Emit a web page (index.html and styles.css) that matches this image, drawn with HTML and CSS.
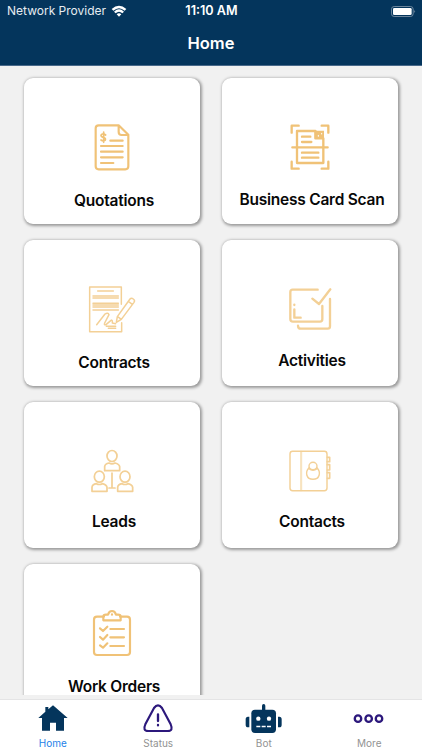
FILE: index.html
```html
<!DOCTYPE html>
<html lang="en">
<head>
<meta charset="utf-8">
<title>Home</title>
<link rel="stylesheet" href="styles.css">
</head>
<body>
<header class="header">
  <div class="status">
    <div class="carrier"><span class="provider">Network Provider</span>
      <svg class="wifi" viewBox="0 0 48 36"><path d="M2 12Q24-8 46 12L41 17Q24 2 7 17ZM9 20Q24 6 39 20L34 25Q24 16 14 25ZM17 28Q24 22 31 28L24 35Z" fill="#fff"/></svg>
    </div>
    <span class="clock">11:10 AM</span>
    <svg class="battery" viewBox="0 0 75 33"><rect x="1.5" y="1.5" width="65" height="30" rx="8" fill="none" stroke="#8195a9" stroke-width="2.5"/><rect x="6" y="6" width="56" height="21" rx="4" fill="#fff"/><path d="M70 12q5 4 0 9z" fill="#8195a9"/></svg>
  </div>
  <h1 class="title">Home</h1>
</header>
<main class="content">
  <section class="grid">
    <a class="card">
      <svg class="icon" viewBox="36 24 180 180" stroke-width="6.5"><path d="M146 46H86Q77 46 77 55V169Q77 178 86 178H166Q175 178 175 169V74L146 46V66Q146 75 155 75H175M121 92H158M93 108H158M93 125H158M93 142H158M93 159H130"/><path d="M107 75Q102 71 97 72Q91 75 94 79Q96 82 101 83Q108 85 106 90Q100 95 93 90M101 66V97" stroke-width="5"/></svg>
      <span class="label quotations">Quotations</span>
    </a>
    <a class="card">
      <svg class="icon" viewBox="150 24 180 180" stroke-width="7"><path d="M185 68V47H206M275 47H295V68M185 155V176H206M275 176H295V155M256 63H201V159H280V85M256 63L280 85M256 63V85H280M187 112H293"/><path d="M257 62H282V86L257 84Z" fill="#f0c277" stroke="none"/><path d="M216 80H241M216 96H244M216 128H265M216 143H265"/><path d="M265 76v3M275 70v2" stroke="#fff" stroke-width="3"/></svg>
      <span class="label scan">Business Card Scan</span>
    </a>
    <a class="card">
      <svg class="icon light" viewBox="36 15 180 180" stroke-width="4.5"><path d="M154 88V36H59V170H155V143M83 48H130M69 63H145M69 69H145M69 85H145M69 90H145M69 96H145M69 105H145M80 149L105 117Q114 111 117 119L104 144Q101 151 108 149L123 136Q128 133 127 144L137 146M109 154H137M115 160H137M142 125L180 72Q184 67 190 72Q196 76 192 82L154 133L139 142ZM175 79L187 88M143 125L154 133"/></svg>
      <span class="label contracts">Contracts</span>
    </a>
    <a class="card">
      <svg class="icon light" viewBox="30 15 180 180" stroke-width="7"><path d="M143 44H68Q61 44 61 51V132Q61 140 69 140H150Q157 140 157 132V93M127 71L147 87L181 43M180 72V154Q180 161 173 161H93Q84 161 84 152M73 89V90M73 103V128H92"/></svg>
      <span class="label activities">Activities</span>
    </a>
    <a class="card">
      <svg class="icon light" viewBox="36 21 180 180" stroke-width="5.2"><g id="person"><ellipse cx="126" cy="63" rx="15" ry="16.5"/><path d="M104 107V95Q105 86 117 84Q126 89 135 84Q148 87 149 95V107Z"/></g><use href="#person" x="-38" y="62"/><use href="#person" x="39" y="62"/><path d="M126 114V158M117 159H135"/></svg>
      <span class="label leads">Leads</span>
    </a>
    <a class="card">
      <svg class="icon light" viewBox="30 21 180 180" stroke-width="4.3"><rect x="60" y="49" width="111" height="118" rx="8"/><path d="M92 49V167M95 49V167" stroke-width="2"/><path d="M172 67H179V80H172M172 89H179V105H172M172 113H179V130H172" stroke-width="5"/><ellipse cx="129" cy="93" rx="12" ry="11"/><path d="M117 98C104 112 109 133 129 133S154 112 141 98M117 101Q129 110 141 101"/></svg>
      <span class="label contacts">Contacts</span>
    </a>
    <a class="card">
      <svg class="icon" viewBox="66 12 180 180" stroke-width="6.5"><path d="M132 50H111Q102 50 102 59V156Q102 165 111 165H201Q210 165 210 156V59Q210 50 201 50H180M130 61V50Q130 44 138 44H144Q147 33 156 33T168 44H174Q182 44 182 50V61ZM156 43V44M151 87H192M151 112H192M151 138H192"/><path d="M120 85L129 93L142 80M120 111L129 119L142 105M120 136L129 143L142 130"/></svg>
      <span class="label orders">Work Orders</span>
    </a>
  </section>
</main>
<nav class="tabs">
  <a class="tab active"><svg class="tabicon" viewBox="98 36 120 96"><path d="M158 46L202 84H191V122H167V98H149V122H125V84H114L135 65V51H144V58Z" fill="#04355c"/></svg><span>Home</span></a>
  <a class="tab"><svg class="tabicon" viewBox="415 36 120 96"><path d="M463 54Q475 38 487 54L513 103Q522 123 504 123H446Q428 123 437 103Z" fill="none" stroke="#2c187c" stroke-width="6.5"/><path d="M475 73V93M475 105V106" fill="none" stroke="#2c187c" stroke-width="7" stroke-linecap="round"/></svg><span>Status</span></a>
  <a class="tab"><svg class="tabicon" viewBox="98 36 120 96"><g fill="#04355c"><rect x="152" y="42" width="10" height="24" rx="5"/><rect x="120" y="59" width="74" height="70" rx="11"/><path d="M114 80V112H110Q103 112 103 104V88Q103 80 110 80ZM200 80V112H204Q211 112 211 104V88Q211 80 204 80Z"/></g><g fill="#fff"><circle cx="141" cy="86" r="6.5"/><circle cx="173" cy="86" r="6.5"/><path d="M135 107H147V112H135ZM151 107H163V112H151ZM167 107H179V112H167Z"/></g></svg><span>Bot</span></a>
  <a class="tab"><svg class="tabicon" viewBox="415 36 120 96"><g fill="none" stroke="#2c187c" stroke-width="7"><circle cx="442" cy="86" r="9.7"/><circle cx="474" cy="86" r="9.7"/><circle cx="505" cy="86" r="9.7"/></g></svg><span>More</span></a>
</nav>
</body>
</html>
```
FILE: styles.css
```css
* { box-sizing: border-box; }
body {
  margin: 0;
  width: 422px;
  height: 750px;
  display: flex;
  flex-direction: column;
  overflow: hidden;
  background: #f1f1f1;
  font-family: Inter, "Liberation Sans", sans-serif;
}
.header {
  height: 66px;
  flex: none;
  background: #04355c;
  border-bottom: 1px solid #48698a;
  color: #fff;
}
.status {
  height: 22px;
  display: grid;
  grid-template-columns: 1fr auto 1fr;
  align-items: center;
  padding: 0 6px 0 7px;
}
.carrier { display: flex; align-items: center; gap: 5px; }
.provider { font-size: 12px; line-height: 22px; color: #e6ecf1; white-space: nowrap; }
.wifi { width: 16px; height: 12px; }
.clock { font-size: 12.6px; font-weight: 600; line-height: 22px; }
.battery { width: 25px; height: 11px; justify-self: end; }
.title {
  margin: 10px 0 0;
  text-align: center;
  font-size: 16.5px;
  font-weight: 600;
  line-height: 22px;
}
.content { height: 629px; flex: none; overflow: hidden; padding: 12px 24px 0; }
.grid {
  display: grid;
  grid-template-columns: 176px 176px;
  grid-auto-rows: 146px;
  gap: 16px 22px;
}
.card {
  display: flex;
  flex-direction: column;
  align-items: center;
  padding-top: 40px;
  border-radius: 9px;
  background: #fff;
  box-shadow: 1px 1px 3px 0.5px rgba(0, 0, 0, 0.36);
}
.icon {
  width: 60px;
  height: 60px;
  flex: none;
  fill: none;
  stroke: #f0c277;
  stroke-linecap: round;
  stroke-linejoin: round;
}
.icon.light { stroke: #f3d096; }
.label {
  margin: 13px 0 0 4px;
  font-size: 15.5px;
  font-weight: 600;
  line-height: 20px;
  letter-spacing: -0.24px;
  white-space: nowrap;
  color: #080808;
}
.scan { margin-top: 12px; }
.activities { margin-top: 11px; }
.leads, .contacts { margin-top: 10px; }
.tabs {
  margin-top: 4px;
  height: 51px;
  flex: none;
  display: grid;
  grid-template-columns: repeat(4, 1fr);
  background: #fff;
  border-top: 1px solid #e4e4e5;
}
.tab {
  display: flex;
  flex-direction: column;
  align-items: center;
  padding-top: 2px;
  font-size: 10px;
  line-height: 12px;
  color: #929292;
}
.tabicon { width: 40px; height: 32px; flex: none; margin-bottom: 3px; }
.active { color: #2482e8; }
```
